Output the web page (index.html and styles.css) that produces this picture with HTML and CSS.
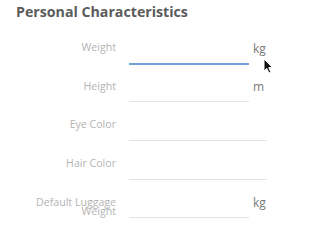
FILE: index.html
```html
<!DOCTYPE html>
<html>
<head>
<meta charset="utf-8">
<link rel="stylesheet" href="styles.css">
</head>
<body>
<div class="card">
  <h2 class="title">Personal Characteristics</h2>
  <div class="form">
    <div class="row">
      <label class="label">Weight</label>
      <div class="field">
        <input class="input focused" type="text">
        <span class="unit">kg</span>
      </div>
    </div>
    <div class="row">
      <label class="label">Height</label>
      <div class="field">
        <input class="input" type="text">
        <span class="unit">m</span>
      </div>
    </div>
    <div class="row">
      <label class="label">Eye Color</label>
      <div class="field">
        <input class="input" type="text">
      </div>
    </div>
    <div class="row">
      <label class="label">Hair Color</label>
      <div class="field">
        <input class="input" type="text">
      </div>
    </div>
    <div class="row">
      <label class="label">Default Luggage Weight</label>
      <div class="field">
        <input class="input" type="text">
        <span class="unit">kg</span>
      </div>
    </div>
  </div>
  <svg class="cursor" width="11" height="16" viewBox="0 0 11 16">
    <path d="M1 1 L1 13 L3.8 10.4 L5.9 15 L7.8 14.1 L5.8 9.6 L9.5 9.6 Z" fill="#111" stroke="#fff" stroke-width="1" stroke-linejoin="round"/>
  </svg>
</div>
</body>
</html>
```
FILE: styles.css
```css
html, body {
  margin: 0;
  padding: 0;
  background: #fff;
}
body {
  width: 305px;
  height: 239px;
  overflow: hidden;
  font-family: "Open Sans", "Liberation Sans", sans-serif;
}
.card {
  position: relative;
  padding: 2px 16px 0 16px;
}
.title {
  margin: 0;
  font-size: 14.2px;
  line-height: 19px;
  font-weight: 700;
  color: #5b5b5b;
}
.form {
  margin-top: 20.8px;
}
.row {
  display: flex;
  align-items: flex-start;
  height: 38.6px;
}
.label {
  width: 100px;
  margin-right: 13px;
  padding-top: 1.5px;
  text-align: right;
  font-size: 10.6px;
  line-height: 9px;
  color: #b4b4b4;
}
.field {
  width: 138px;
  display: flex;
  align-items: flex-start;
  gap: 4px;
}
.input {
  flex: 1;
  min-width: 0;
  height: 22px;
  box-sizing: border-box;
  margin: 0;
  padding: 0;
  border: none;
  border-bottom: 1px solid #e4e4e4;
  outline: none;
  background: transparent;
  font-family: inherit;
}
.input.focused {
  height: 23px;
  border-bottom: 2px solid #6fa3dc;
}
.unit {
  width: 14px;
  margin-top: -2px;
  font-size: 12px;
  color: #7a7a7a;
}
.cursor {
  position: absolute;
  left: 263px;
  top: 58px;
}
```
